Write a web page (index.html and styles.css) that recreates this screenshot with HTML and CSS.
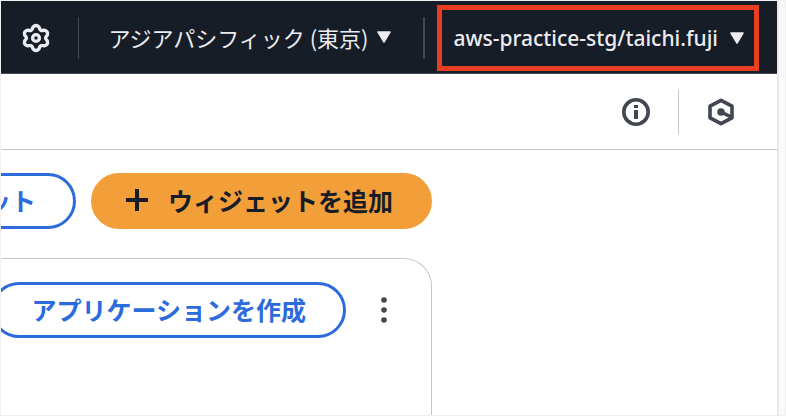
FILE: index.html
```html
<!DOCTYPE html>
<html lang="ja">
<head>
<meta charset="utf-8">
<meta name="viewport" content="width=device-width, initial-scale=1">
<title>AWS</title>
<link rel="stylesheet" href="styles.css">
</head>
<body>
<div class="window">
  <div class="page">
    <header class="topbar">
      <button class="icon-button settings" type="button">
        <svg width="30" height="30" viewBox="0 0 30 30" fill="none" stroke="#ebebf0" stroke-width="3.4" stroke-linejoin="round">
          <path d="M12 4.2Q15 .8 18 4.2C18.6 7.2 20.4 8.3 23.2 7.2Q27.6 8.2 26.3 12.2C24 14.2 24 15.8 26.3 17.8Q27.6 21.8 23.2 22.8C20.4 21.7 18.6 22.8 18 25.8Q15 29.2 12 25.8C11.4 22.8 9.6 21.7 6.8 22.8Q2.4 21.8 3.7 17.8C6 15.800 6 14.200 3.700 12.200Q2.400 8.200 6.800 7.200C9.600 8.300 11.400 7.200 12 4.200Z"/>
          <circle cx="15" cy="15" r="3.400" stroke-width="3.400"/>
        </svg>
      </button>
      <span class="rule"></span>
      <button class="menu-button region" type="button">アジアパシフィック (東京)
        <svg class="caret" width="14" height="12" viewBox="0 0 14 12"><path d="M1 1h12L7 11Z" fill="#ebebf0" stroke="#ebebf0" stroke-width="1.500" stroke-linejoin="round"/></svg>
      </button>
      <span class="rule rule-wide"></span>
      <button class="menu-button account" type="button">aws-practice-stg/taichi.fuji
        <svg class="caret" width="14" height="12" viewBox="0 0 14 12"><path d="M1 1h12L7 11Z" fill="#ebebf0" stroke="#ebebf0" stroke-width="1.500" stroke-linejoin="round"/></svg>
      </button>
    </header>
    <div class="toolbar">
      <button class="icon-button" type="button">
        <svg width="28" height="28" viewBox="0 0 28 28">
          <circle cx="14" cy="14" r="12.200" fill="none" stroke="#424650" stroke-width="3.600"/>
          <path d="M12 7h4v3h-4zM12 12h4v9h-4z" fill="#424650"/>
        </svg>
      </button>
      <span class="rule rule-light"></span>
      <button class="icon-button" type="button">
        <svg width="28" height="28" viewBox="0 0 28 28" fill="none" stroke="#424650" stroke-width="3.600">
          <path d="M14 2.300 25 8.200V19.800L14 25.700 3 19.800V8.200Z" stroke-linejoin="round"/>
          <path d="M14 14 24 18.800"/>
          <circle cx="14" cy="14" r="3.800" fill="#424650" stroke="none"/>
        </svg>
      </button>
    </div>
    <main class="content">
      <div class="actions">
        <button class="button" type="button">ット</button>
        <button class="button button-primary" type="button">
          <svg width="22" height="22" viewBox="0 0 22 22"><path d="M11 0v22M0 11h22" stroke="#161d26" stroke-width="4"/></svg>
          ウィジェットを追加
        </button>
      </div>
      <section class="card">
        <button class="button" type="button">アプリケーションを作成</button>
        <button class="icon-button" type="button">
          <svg width="28" height="28" viewBox="0 0 28 28" fill="#424650"><circle cx="14" cy="4" r="2.800"/><circle cx="14" cy="14" r="2.800"/><circle cx="14" cy="24" r="2.800"/></svg>
        </button>
      </section>
    </main>
  </div>
  <div class="gutter"></div>
</div>
</body>
</html>
```
FILE: styles.css
```css
* {
  box-sizing: border-box;
}

body {
  margin: 0;
  background: #fff;
  font-family: "Noto Sans CJK JP", sans-serif;
}

button {
  margin: 0;
  padding: 0;
  border: 0;
  background: none;
  color: inherit;
  font: inherit;
  white-space: nowrap;
  cursor: pointer;
}

svg {
  display: block;
  flex: none;
}

.window {
  display: flex;
  height: 100vh;
  border: 1px solid #efefef;
  overflow: hidden;
}

.page {
  display: flex;
  flex: 1;
  flex-direction: column;
  min-width: 0;
  overflow: hidden;
}

.gutter {
  width: 8px;
  border-left: 2px solid #e8e8e8;
  background: #fafafa;
}

.topbar {
  display: flex;
  flex: none;
  align-items: center;
  justify-content: flex-end;
  padding: 4px 18px 2px 20px;
  border-bottom: 1px solid #424650;
  background: #161d26;
  color: #ebebf0;
}

.settings {
  margin-right: auto;
}

.rule {
  width: 1px;
  height: 42px;
  background: #424650;
}

.rule-wide {
  width: 2px;
  margin-right: 12px;
}

.menu-button {
  display: flex;
  align-items: center;
  line-height: 28px;
}

.region {
  gap: 8px;
  padding: 0 32px 2px 29px;
  font-size: 22px;
}

.account {
  gap: 12px;
  height: 66px;
  padding: 0 10px 0 12px;
  border: 5px solid #e83e22;
  font-family: "Noto Sans", sans-serif;
  font-size: 21px;
  font-weight: 500;
}

.toolbar {
  display: flex;
  flex: none;
  align-items: center;
  justify-content: flex-end;
  gap: 28px;
  padding: 16px 42px 15px;
  border-bottom: 1px solid #c6c6cd;
}

.rule-light {
  height: 44px;
  background: #c6c6cd;
}

.content {
  display: flex;
  flex: 1;
  flex-direction: column;
  gap: 29px;
  width: 485px;
  margin-left: -54px;
  padding-top: 23px;
}

.actions {
  display: flex;
  justify-content: flex-end;
  gap: 15px;
}

.button {
  display: flex;
  align-items: center;
  gap: 20px;
  height: 56px;
  padding: 0 37px 2px;
  border: 3px solid #2b6bdc;
  border-radius: 28px;
  color: #2b6bdc;
  font-size: 25px;
  font-weight: 700;
}

.button-primary {
  padding: 0 36px 2px 32px;
  border-color: #f29f3a;
  background: #f29f3a;
  color: #161d26;
}

.card {
  display: flex;
  flex: 1;
  align-items: flex-start;
  justify-content: flex-end;
  gap: 24px;
  padding: 23px 33px 0 0;
  border: 1px solid #c6c6cd;
  border-bottom: 0;
  border-top-right-radius: 28px;
}

.card .icon-button {
  padding: 14px 0;
}
```
